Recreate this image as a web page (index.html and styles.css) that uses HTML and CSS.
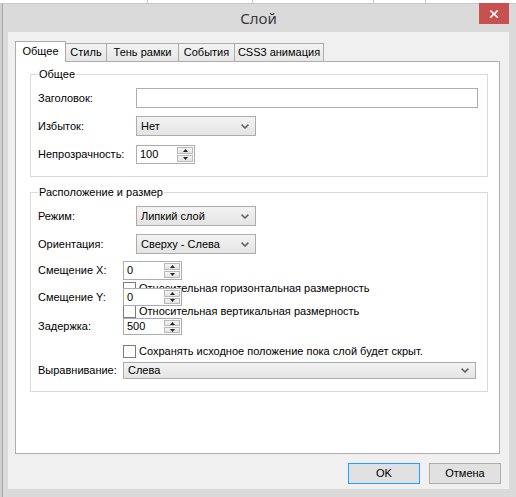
FILE: index.html
```html
<!DOCTYPE html>
<html lang="ru">
<head>
<meta charset="utf-8">
<title>Слой</title>
<link rel="stylesheet" href="styles.css">
</head>
<body>
<div class="desk"><span class="d1"></span><span class="d2"></span><span class="d3"></span><span class="d4"></span></div>
<div class="window">
  <div class="titlebar">
    <span></span>
    <div class="title">Слой</div>
    <div class="close"><svg width="10" height="8" viewBox="0 0 10 8"><path d="M1.2 0.4 L8.8 7.6 M8.8 0.4 L1.2 7.6" stroke="#fff" stroke-width="1.6" fill="none"/></svg></div>
  </div>
  <div class="client">
    <div class="tabs">
      <div class="tab active t1">Общее</div>
      <div class="tab t2">Стиль</div>
      <div class="tab t3">Тень рамки</div>
      <div class="tab t4">События</div>
      <div class="tab t5">CSS3 анимация</div>
    </div>
    <div class="panel">
      <fieldset class="group g1">
        <legend>Общее</legend>
        <div class="row r-head">
          <div class="lbl">Заголовок:</div>
          <div class="textbox"></div>
        </div>
        <div class="row r-excess">
          <div class="lbl">Избыток:</div>
          <div class="select">Нет<svg class="chev" width="8" height="5" viewBox="0 0 8 5"><path d="M0.6 0.6 L4 4 L7.4 0.6" fill="none" stroke="#606060" stroke-width="1.5"/></svg></div>
        </div>
        <div class="row r-opacity">
          <div class="lbl">Непрозрачность:</div>
          <div class="spin"><div class="val">100</div><div class="arrows"><div class="ab"><svg width="5" height="3" viewBox="0 0 5 3"><path d="M0 3 L2.5 0 L5 3Z" fill="#222"/></svg></div><div class="ab"><svg width="5" height="3" viewBox="0 0 5 3"><path d="M0 0 L2.5 3 L5 0Z" fill="#222"/></svg></div></div></div>
        </div>
      </fieldset>
      <fieldset class="group g2">
        <legend>Расположение и размер</legend>
        <div class="row r-mode">
          <div class="lbl">Режим:</div>
          <div class="select">Липкий слой<svg class="chev" width="8" height="5" viewBox="0 0 8 5"><path d="M0.6 0.6 L4 4 L7.4 0.6" fill="none" stroke="#606060" stroke-width="1.5"/></svg></div>
        </div>
        <div class="row r-orient">
          <div class="lbl">Ориентация:</div>
          <div class="select">Сверху - Слева<svg class="chev" width="8" height="5" viewBox="0 0 8 5"><path d="M0.6 0.6 L4 4 L7.4 0.6" fill="none" stroke="#606060" stroke-width="1.5"/></svg></div>
        </div>
        <div class="row r-offx">
          <div class="lbl narrow">Смещение X:</div>
          <div class="spin"><div class="val">0</div><div class="arrows"><div class="ab"><svg width="5" height="3" viewBox="0 0 5 3"><path d="M0 3 L2.5 0 L5 3Z" fill="#222"/></svg></div><div class="ab"><svg width="5" height="3" viewBox="0 0 5 3"><path d="M0 0 L2.5 3 L5 0Z" fill="#222"/></svg></div></div></div>
        </div>
        <div class="cbrow cb-h"><span class="box"></span><span class="cbtext">Относительная горизонтальная размерность</span></div>
        <div class="row r-offy">
          <div class="lbl narrow">Смещение Y:</div>
          <div class="spin"><div class="val">0</div><div class="arrows"><div class="ab"><svg width="5" height="3" viewBox="0 0 5 3"><path d="M0 3 L2.5 0 L5 3Z" fill="#222"/></svg></div><div class="ab"><svg width="5" height="3" viewBox="0 0 5 3"><path d="M0 0 L2.5 3 L5 0Z" fill="#222"/></svg></div></div></div>
        </div>
        <div class="cbrow cb-v"><span class="box"></span><span class="cbtext">Относительная вертикальная размерность</span></div>
        <div class="row r-delay">
          <div class="lbl narrow">Задержка:</div>
          <div class="spin"><div class="val">500</div><div class="arrows"><div class="ab"><svg width="5" height="3" viewBox="0 0 5 3"><path d="M0 3 L2.5 0 L5 3Z" fill="#222"/></svg></div><div class="ab"><svg width="5" height="3" viewBox="0 0 5 3"><path d="M0 0 L2.5 3 L5 0Z" fill="#222"/></svg></div></div></div>
        </div>
        <div class="cbrow cb-keep"><span class="box"></span><span class="cbtext">Сохранять исходное положение пока слой будет скрыт.</span></div>
        <div class="row r-align">
          <div class="lbl narrow">Выравнивание:</div>
          <div class="select wide">Слева<svg class="chev" width="8" height="5" viewBox="0 0 8 5"><path d="M0.6 0.6 L4 4 L7.4 0.6" fill="none" stroke="#606060" stroke-width="1.5"/></svg></div>
        </div>
      </fieldset>
    </div>
    <div class="buttons">
      <div class="btn default">OK</div>
      <div class="btn">Отмена</div>
    </div>
  </div>
</div>
</body>
</html>
```
FILE: styles.css
```css
* { box-sizing: border-box; }
html, body { margin: 0; padding: 0; }
body {
  width: 516px;
  height: 497px;
  overflow: hidden;
  background: #cfcfcf;
  font-family: "Liberation Sans", Arial, sans-serif;
  font-size: 11px;
  color: #000;
}
.desk { display: flex; height: 3px; background: #fff; }
.desk span { height: 3px; border-right: 1px solid #cdcdcd; }
.desk .d1 { width: 148px; }
.desk .d2 { width: 105px; }
.desk .d3 { width: 121px; }
.desk .d4 { width: 52px; }

.window {
  margin-left: 2px;
  width: 514px;
  height: 494px;
  background: #dadada;
  border-left: 1px solid #a8a8a8;
  border-top: 1px solid #c6c6c6;
  padding: 0 7px 8px 5px;
}
.titlebar {
  display: grid;
  grid-template-columns: 1fr auto 1fr;
  height: 28px;
}
.title {
  align-self: center;
  font-family: "Noto Sans", "Open Sans", sans-serif;
  font-size: 15px;
  line-height: 20px;
  color: #3a3a3a;
}
.close {
  justify-self: end;
  align-self: start;
  margin-top: -1px;
  width: 30px;
  height: 21px;
  background: #c75050;
  display: flex;
  align-items: center;
  justify-content: center;
}
.close svg { display: block; }

.client {
  width: 501px;
  height: 457px;
  background: #f0f0f0;
  padding: 9px 9px 0 7px;
}
.tabs {
  display: flex;
  align-items: flex-start;
  height: 21px;
  margin-bottom: -1px;
  position: relative;
  z-index: 1;
}
.tab {
  height: 18px;
  margin-top: 2px;
  margin-left: -1px;
  border: 1px solid #acacac;
  border-bottom: none;
  background: linear-gradient(#f4f4f4, #e6e6e6);
  display: flex;
  align-items: center;
  justify-content: center;
  line-height: 13px;
  white-space: nowrap;
}
.tab.active {
  height: 21px;
  margin-top: 0;
  margin-left: 0;
  background: #fff;
  padding-bottom: 2px;
  position: relative;
  z-index: 2;
}
.t1 { width: 51px; }
.t2 { width: 42px; }
.t3 { width: 73px; }
.t4 { width: 57px; }
.t5 { width: 90px; }

.panel {
  height: 393px;
  background: #fff;
  border: 1px solid #adadad;
  padding: 5px 11px 0 14px;
}
.group {
  margin: 0;
  min-width: 0;
  border: 1px solid #d9d9d9;
  padding: 0 0 12px 7px;
}
.group legend {
  padding: 0 1px;
  margin: 0;
  height: 14px;
  line-height: 14px;
}
.g2 { margin-top: 8px; }

.row { display: flex; align-items: center; }
.lbl { flex: none; width: 98px; line-height: 13px; white-space: nowrap; }
.lbl.narrow { width: 85px; }

.r-head { margin-top: 7px; height: 20px; }
.r-excess { margin-top: 8px; height: 20px; }
.r-opacity { margin-top: 9px; height: 19px; }
.r-mode { margin-top: 7px; height: 20px; }
.r-orient { margin-top: 8px; height: 20px; }
.r-offx { margin-top: 7px; height: 19px; }
.cb-h { margin-top: 2px; }
.r-offy { margin-top: -7px; height: 18px; }
.cb-v { margin-top: -1px; }
.r-delay { margin-top: 0; height: 17px; }
.cb-keep { margin-top: 10px; }
.r-align { margin-top: 4px; height: 17px; }

.textbox {
  width: 342px;
  height: 20px;
  border: 1px solid #abadb3;
  background: #fff;
}
.select {
  width: 120px;
  height: 100%;
  border: 1px solid #acacac;
  background: linear-gradient(#f3f3f3, #e4e4e4);
  display: flex;
  align-items: center;
  justify-content: space-between;
  padding: 0 6px 0 4px;
  line-height: 13px;
  white-space: nowrap;
}
.select.wide { width: 353px; }
.chev { display: block; flex: none; }

.spin {
  position: relative;
  width: 59px;
  height: 100%;
  border: 1px solid #abadb3;
  background: #fff;
  display: flex;
}
.val {
  flex: 1;
  display: flex;
  align-items: center;
  padding-left: 3px;
  line-height: 13px;
}
.arrows {
  flex: none;
  width: 17px;
  display: flex;
  flex-direction: column;
  gap: 1px;
  padding: 1px 1px 1px 0;
}
.ab {
  flex: 1;
  border: 1px solid #b9b9b9;
  background: linear-gradient(#f5f5f5, #e3e3e3);
  display: flex;
  align-items: center;
  justify-content: center;
}
.ab svg { display: block; }

.cbrow {
  display: flex;
  align-items: center;
  height: 13px;
  margin-left: 85px;
}
.box {
  flex: none;
  width: 13px;
  height: 13px;
  border: 1px solid #7c7c7c;
  background: #fff;
}
.cbtext { margin-left: 3px; line-height: 13px; white-space: nowrap; }

.buttons {
  display: flex;
  justify-content: flex-end;
  gap: 9px;
  margin-top: 9px;
  margin-right: -1px;
}
.btn {
  width: 72px;
  height: 21px;
  border: 1px solid #adadad;
  background: #e1e1e1;
  display: flex;
  align-items: center;
  justify-content: center;
  line-height: 13px;
}
.btn.default {
  border-color: #3399ff;
  box-shadow: inset 0 0 0 1px #cfe5fb;
}
```
